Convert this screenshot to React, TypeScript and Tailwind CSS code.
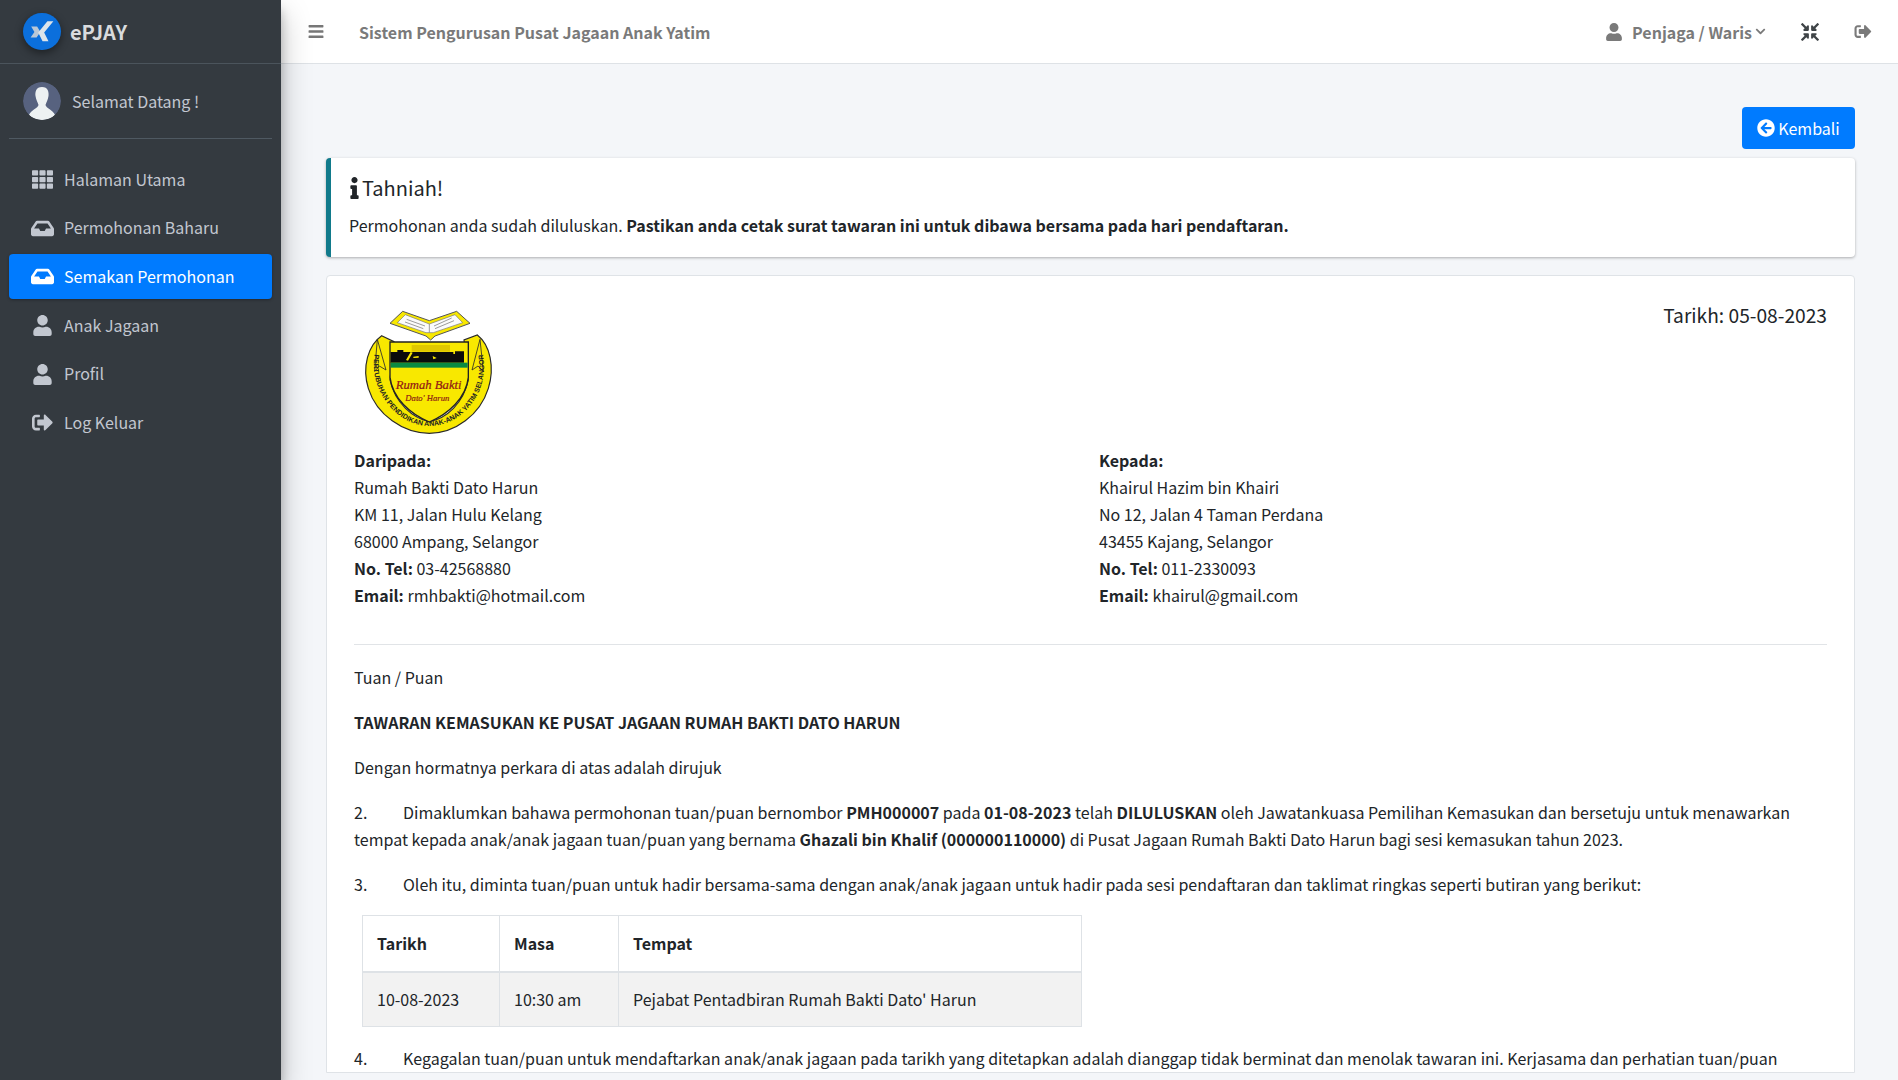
import React from "react";
import { FaTh, FaInbox, FaUser, FaSignOutAlt, FaBars, FaChevronDown, FaCompressArrowsAlt, FaArrowCircleLeft, FaInfo } from "react-icons/fa";

const font = { fontFamily: '"Noto Sans CJK SC", "Noto Sans", sans-serif' };

function Logo() {
  return (
    <svg viewBox="0 0 540 480" className="w-[180px] h-[160px] block">
      <defs>
        <path id="ring" d="M104 190 C84 300 170 408 268 408 C372 408 452 300 428 190" />
      </defs>
      {/* outer ring */}
      <path d="M125 137 L162 155 L150 270 C165 340 220 385 268 395 C320 385 370 340 385 270 L372 150 L412 135 C450 165 465 230 445 295 C420 375 345 430 268 430 C190 430 110 375 85 295 C65 230 85 165 125 137 Z" fill="#f8e800" stroke="#2a2a2a" strokeWidth="3.500" />
      <path d="M112 148 L138 240 L118 228 L104 244 Z M420 148 L396 240 L414 228 L430 244 Z" fill="#f8e800" stroke="#2a2a2a" strokeWidth="2.500" />
      {/* shield */}
      <path d="M150 156 H385 V262 C378 325 325 372 268 396 C210 372 158 325 150 262 Z" fill="#f8e800" stroke="#222" strokeWidth="4" />
      <rect x="215" y="165" width="115" height="20" fill="#e0c800" />
      <path d="M152 186 H172 V180 H190 V186 H340 V192 H345 V184 H372 V218 H152 Z" fill="#0c0c0c" />
      <path d="M198 210 L212 186 L218 188 L204 212 Z M220 200 L236 198 L236 203 L220 204 Z M278 198 L290 204 L280 208 Z" fill="#f8e800" />
      <rect x="152" y="218" width="231" height="15" fill="#0b8a42" />
      <text x="266" y="296" textAnchor="middle" fill="#a81616" stroke="#5a1010" strokeWidth="0.6" fontSize="38" fontStyle="italic" fontFamily="Liberation Serif, serif">Rumah Bakti</text>
      <text x="262" y="332" textAnchor="middle" fill="#a81616" stroke="#5a1010" strokeWidth="0.5" fontSize="26" fontStyle="italic" fontFamily="Liberation Serif, serif">Dato' Harun</text>
      <text fontSize="21" fontWeight="700" fill="#222" fontFamily="Liberation Sans, sans-serif">
        <textPath href="#ring" startOffset="50%" textAnchor="middle">PERTUBUHAN PENDIDIKAN ANAK-ANAK YATIM SELANGOR</textPath>
      </text>
      {/* book */}
      <path d="M150 100 L188 64 L268 92 L350 64 L390 100 L285 138 L272 150 L258 138 Z" fill="#f8e800" stroke="#555" strokeWidth="3" />
      <path d="M172 98 L196 74 L268 102 L345 74 L368 98 L280 128 L258 128 Z" fill="#fbfbfb" stroke="#777" strokeWidth="2" />
      <path d="M200 88 L255 108 M195 96 L250 116 M335 84 L282 108 M342 92 L285 116 M268 102 L268 128" stroke="#888" strokeWidth="2.500" fill="none" />
    </svg>
  );
}

function Avatar() {
  return (
    <svg viewBox="0 0 38 38" className="w-[38px] h-[38px] rounded-full block">
      <circle cx="19" cy="19" r="19" fill="#57627f" />
      <path d="M19 5 C13 5 12 10 12.500 14 C13 18 15 21 15.500 23 C15 26 8 28 6 33 C10 37 15 38 19 38 C24 38 28 37 32 33 C30 28 23 26 22.500 23 C23 21 25 18 25.500 14 C26 10 25 5 19 5 Z" fill="#edf1f2" />
    </svg>
  );
}

function BrandMark() {
  return (
    <div className="w-[38px] h-[37px] rounded-full bg-[#0b6fdc] shadow-[0_3px_8px_rgba(0,0,0,0.45)] flex items-center justify-center">
      <svg viewBox="0 0 24 24" className="w-[26px] h-[26px]">
        <path d="M2 7 H7.500 L10.500 12 L7 17 H1.500 L5 12 Z" fill="#b9c7d6" />
        <path d="M17 2 H22.500 L14 12.500 L18 20.500 H12.500 L8.500 12.500 Z" fill="#dce4ea" />
      </svg>
    </div>
  );
}

const nav = [
  { label: "Halaman Utama", icon: FaTh },
  { label: "Permohonan Baharu", icon: FaInbox },
  { label: "Semakan Permohonan", icon: FaInbox, active: true },
  { label: "Anak Jagaan", icon: FaUser },
  { label: "Profil", icon: FaUser },
  { label: "Log Keluar", icon: FaSignOutAlt },
];

function Sidebar() {
  return (
    <aside className="w-[281px] h-screen shrink-0 bg-[#343a40] shadow-[0_14px_28px_rgba(0,0,0,0.25),0_10px_10px_rgba(0,0,0,0.22)] z-10 flex flex-col">
      <div className="h-[64px] border-b border-[#4b545c] flex items-center pl-[23px] gap-[9px]">
        <BrandMark />
        <span className="text-[20px] font-semibold text-[#d9dbdd]">ePJAY</span>
      </div>
      <div className="mx-[9px] h-[75px] border-b border-[#4f5962] flex items-center pl-[14px] gap-[11px]">
        <Avatar />
        <span className="text-[16px] text-[#c2c7d0]">Selamat Datang !</span>
      </div>
      <nav className="mt-[18px] mx-[9px] flex flex-col gap-[3.7px]">
        {nav.map((n) => {
          const Icon = n.icon;
          return (
            <div
              key={n.label}
              className={
                n.active
                  ? "h-[45px] rounded-[4px] bg-[#007bff] text-white flex items-center pl-[22px] gap-[10px] shadow-[0_1px_3px_rgba(0,0,0,0.3)]"
                  : "h-[45px] rounded-[4px] text-[#c2c7d0] flex items-center pl-[22px] gap-[10px]"
              }
            >
              <Icon className="w-[23px] h-[21px] shrink-0" />
              <span className="text-[16px] leading-none -mt-[2px]">{n.label}</span>
            </div>
          );
        })}
      </nav>
    </aside>
  );
}

function Header() {
  return (
    <header className="h-[64px] shrink-0 bg-white border-b border-[#dee2e6] flex items-center pl-[27px] pr-[26px] text-[#7a7a7a]">
      <FaBars className="w-[16px] h-[17px] text-[#777]" />
      <span className="ml-[35px] text-[16px] font-semibold">Sistem Pengurusan Pusat Jagaan Anak Yatim</span>
      <div className="ml-auto flex items-center">
        <FaUser className="w-[18px] h-[18px]" />
        <span className="ml-[9px] text-[16px] font-semibold">Penjaga / Waris</span>
        <FaChevronDown className="ml-[3px] w-[11px] h-[11px]" />
        <FaCompressArrowsAlt className="ml-[35px] w-[18px] h-[18px] text-[#3f4447]" />
        <FaSignOutAlt className="ml-[35px] w-[18px] h-[17px]" />
      </div>
    </header>
  );
}

function Alert() {
  return (
    <div className="mt-[9px] h-[99px] bg-white rounded-[4px] border-l-[5px] border-[#117a8b] shadow-[0_1px_3px_rgba(0,0,0,0.3)] pl-[18px] pt-[15px] text-[#212529]">
      <div className="flex items-center h-[30px]">
        <FaInfo className="w-[11px] h-[22px] text-[#212529]" />
        <span className="ml-[2px] text-[20px] leading-none">Tahniah!</span>
      </div>
      <p className="mt-[9px] text-[16px] leading-[27px]">
        Permohonan anda sudah diluluskan. <b className="font-bold">Pastikan anda cetak surat tawaran ini untuk dibawa bersama pada hari pendaftaran.</b>
      </p>
    </div>
  );
}

function Address({ title, lines, tel, email }: { title: string; lines: string[]; tel: string; email: string }) {
  return (
    <div className="w-[745px] shrink-0">
      <div className="font-bold">{title}</div>
      {lines.map((l) => (
        <div key={l}>{l}</div>
      ))}
      <div>
        <b className="font-bold">No. Tel:</b> {tel}
      </div>
      <div>
        <b className="font-bold">Email:</b> {email}
      </div>
    </div>
  );
}

function Letter() {
  return (
    <div className="mt-[18px] bg-white border border-[#dfe3e7] rounded-t-[4px] pl-[27px] pr-[27px] pt-[16px] text-[16px] leading-[27px] text-[#212529]">
      <div className="flex justify-between items-start">
        <div className="-ml-[14px] -mt-[2px]">
          <Logo />
        </div>
        <div className="text-[19.2px] leading-[30px] mt-[8px]">Tarikh: 05-08-2023</div>
      </div>
      <div className="flex -mt-[3px]">
        <Address title="Daripada:" lines={["Rumah Bakti Dato Harun", "KM 11, Jalan Hulu Kelang", "68000 Ampang, Selangor"]} tel="03-42568880" email="rmhbakti@hotmail.com" />
        <Address title="Kepada:" lines={["Khairul Hazim bin Khairi", "No 12, Jalan 4 Taman Perdana", "43455 Kajang, Selangor"]} tel="011-2330093" email="khairul@gmail.com" />
      </div>
      <hr className="mt-[35px] border-[#e1e4e7]" />
      <p className="mt-[19px]">Tuan / Puan</p>
      <p className="mt-[18px] font-bold">TAWARAN KEMASUKAN KE PUSAT JAGAAN RUMAH BAKTI DATO HARUN</p>
      <p className="mt-[18px]">Dengan hormatnya perkara di atas adalah dirujuk</p>
      <p className="mt-[18px]">
        <span className="inline-block w-[49px]">2.</span>Dimaklumkan bahawa permohonan tuan/puan bernombor <b className="font-bold">PMH000007</b> pada <b className="font-bold">01-08-2023</b> telah <b className="font-bold">DILULUSKAN</b> oleh Jawatankuasa Pemilihan Kemasukan dan bersetuju untuk menawarkan tempat kepada anak/anak jagaan tuan/puan yang bernama <b className="font-bold">Ghazali bin Khalif (000000110000)</b> di Pusat Jagaan Rumah Bakti Dato Harun bagi sesi kemasukan tahun 2023.
      </p>
      <p className="mt-[18px]">
        <span className="inline-block w-[49px]">3.</span>Oleh itu, diminta tuan/puan untuk hadir bersama-sama dengan anak/anak jagaan untuk hadir pada sesi pendaftaran dan taklimat ringkas seperti butiran yang berikut:
      </p>
      <table className="mt-[17px] ml-[8px] w-[720px] border-collapse border border-[#dee2e6] table-fixed">
        <thead>
          <tr className="h-[56px]">
            <th className="w-[137px] border border-[#dee2e6] border-b-2 px-[14px] text-left font-bold">Tarikh</th>
            <th className="w-[119px] border border-[#dee2e6] border-b-2 px-[14px] text-left font-bold">Masa</th>
            <th className="border border-[#dee2e6] border-b-2 px-[14px] text-left font-bold">Tempat</th>
          </tr>
        </thead>
        <tbody>
          <tr className="h-[55px] bg-[#f2f2f2]">
            <td className="border border-[#dee2e6] px-[14px]">10-08-2023</td>
            <td className="border border-[#dee2e6] px-[14px]">10:30 am</td>
            <td className="border border-[#dee2e6] px-[14px]">Pejabat Pentadbiran Rumah Bakti Dato' Harun</td>
          </tr>
        </tbody>
      </table>
      <p className="mt-[18px]">
        <span className="inline-block w-[49px]">4.</span>Kegagalan tuan/puan untuk mendaftarkan anak/anak jagaan pada tarikh yang ditetapkan adalah dianggap tidak berminat dan menolak tawaran ini. Kerjasama dan perhatian tuan/puan
      </p>
    </div>
  );
}

export default function App() {
  return (
    <div style={font} className="flex h-screen w-full overflow-hidden bg-[#f4f6f9]">
      <Sidebar />
      <div className="flex-1 min-w-0 flex flex-col">
        <Header />
        <main className="flex-1 min-h-0 overflow-hidden pl-[45px] pr-[43px] pt-[43px]">
          <div className="flex justify-end">
            <button className="w-[113px] h-[42px] rounded-[4px] bg-[#007bff] text-white text-[16px] flex items-center justify-center gap-[3px]">
              <FaArrowCircleLeft className="w-[18px] h-[18px]" />
              Kembali
            </button>
          </div>
          <Alert />
          <Letter />
        </main>
      </div>
    </div>
  );
}
